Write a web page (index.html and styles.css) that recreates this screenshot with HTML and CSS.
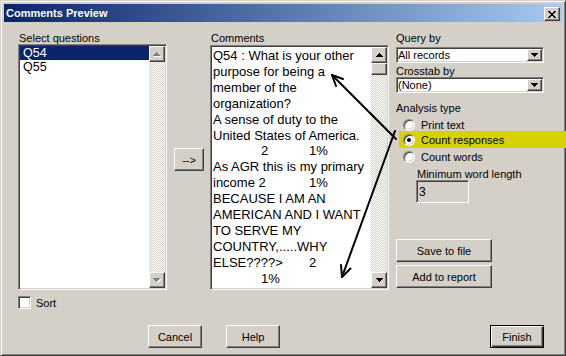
FILE: index.html
```html
<!DOCTYPE html>
<html>
<head>
<meta charset="utf-8">
<title>Comments Preview</title>
<link rel="stylesheet" href="styles.css">
</head>
<body>
<div class="window">
  <div class="titlebar">
    <span class="title">Comments Preview</span>
    <div class="close raised"><svg width="8" height="7" viewBox="0 0 8 7"><path d="M0 0h2v1H0zM6 0h2v1H6zM1 1h2v1H1zM5 1h2v1H5zM2 2h4v1H2zM3 3h2v1H3zM2 4h4v1H2zM1 5h2v1H1zM5 5h2v1H5zM0 6h2v1H0zM6 6h2v1H6z" fill="#000"/></svg></div>
  </div>
  <div class="client">
    <div class="main">
      <div class="col col-left">
        <div class="label pad1">Select questions</div>
        <div class="listbox sunken">
          <div class="list-items">
            <div class="item selected">Q54</div>
            <div class="item">Q55</div>
          </div>
          <div class="vscroll">
            <div class="sb-btn raised"><svg width="8" height="5" viewBox="0 0 8 5"><path d="M4 1h1v1h1v1h1v1h1v1H1V4h1V3h1V2h1z" fill="#fff"/><path d="M3 0h1v1h1v1h1v1h1v1H0V3h1V2h1V1h1z" fill="#808080"/></svg></div>
            <div class="sb-track"></div>
            <div class="sb-btn raised"><svg width="8" height="5" viewBox="0 0 8 5"><path d="M1 1h7v1H7v1H6v1H5v1H4V4H3V3H2V2H1z" fill="#fff"/><path d="M0 0h7v1H6v1H5v1H4v1H3V3H2V2H1V1H0z" fill="#808080"/></svg></div>
          </div>
        </div>
        <div class="check-row"><span class="checkbox sunken"></span><span>Sort</span></div>
      </div>
      <div class="col col-mid">
        <div class="btn raised arrow-btn">--&gt;</div>
      </div>
      <div class="col col-comments">
        <div class="label pad1">Comments</div>
        <div class="memo sunken">
          <div class="memo-text">Q54 : What is your other
purpose for being a
member of the
organization?
A sense of duty to the
United States of America.
&#9;2&#9;1%
As AGR this is my primary
income 2&#9;1%
BECAUSE I AM AN
AMERICAN AND I WANT
TO SERVE MY
COUNTRY,.....WHY
ELSE????&gt;&#9;2
&#9;1%</div>
          <div class="vscroll">
            <div class="sb-btn raised"><svg width="7" height="4" viewBox="0 0 7 4"><path d="M3 0h1v1h1v1h1v1h1v1H0V3h1V2h1V1h1z" fill="#000"/></svg></div>
            <div class="sb-thumb raised"></div>
            <div class="sb-track"></div>
            <div class="sb-btn raised"><svg width="7" height="4" viewBox="0 0 7 4"><path d="M0 0h7v1H6v1H5v1H4v1H3V3H2V2H1V1H0z" fill="#000"/></svg></div>
          </div>
        </div>
      </div>
      <div class="col col-right">
        <div class="label">Query by</div>
        <div class="combo sunken combo-first">
          <span class="combo-text">All records</span>
          <span class="combo-btn raised"><svg width="7" height="4" viewBox="0 0 7 4"><path d="M0 0h7v1H6v1H5v1H4v1H3V3H2V2H1V1H0z" fill="#000"/></svg></span>
        </div>
        <div class="label label-cross">Crosstab by</div>
        <div class="combo sunken">
          <span class="combo-text">(None)</span>
          <span class="combo-btn raised"><svg width="7" height="4" viewBox="0 0 7 4"><path d="M0 0h7v1H6v1H5v1H4v1H3V3H2V2H1V1H0z" fill="#000"/></svg></span>
        </div>
        <div class="label label-analysis">Analysis type</div>
        <div class="radios">
          <div class="radio-row"><span class="radio"></span><span>Print text</span></div>
          <div class="radio-row hl"><span class="radio checked"></span><span>Count responses</span></div>
          <div class="radio-row r3"><span class="radio"></span><span>Count words</span></div>
        </div>
        <div class="label minlen">Minimum word length</div>
        <div class="numbox sunken">3</div>
        <div class="btn raised side-btn save-btn">Save to file</div>
        <div class="btn raised side-btn add-btn">Add to report</div>
      </div>
    </div>
    <div class="footer">
      <div class="btn raised fbtn">Cancel</div>
      <div class="btn raised fbtn help-btn">Help</div>
      <div class="btn default fbtn finish-btn">Finish</div>
    </div>
  </div>
  <svg class="annot" width="566" height="356" viewBox="0 0 566 356">
    <g stroke="#000" stroke-width="2" fill="none" stroke-linecap="round" stroke-linejoin="round">
      <path d="M396 139 L332 75"/>
      <path d="M336 86 L332 75 L343 79"/>
      <path d="M395 131 L342 277"/>
      <path d="M341 265 L342 277 L350.5 268.5"/>
    </g>
  </svg>
</div>
</body>
</html>
```

FILE: styles.css
```css
* { box-sizing: border-box; }
html, body { margin: 0; padding: 0; }
body {
  width: 566px;
  height: 356px;
  overflow: hidden;
  background: #d4d0c8;
  font-family: "Liberation Sans", Arial, sans-serif;
  font-size: 11px;
  color: #000;
}
.window {
  position: relative;
  width: 566px;
  height: 356px;
  border: 1px solid;
  border-color: #d4d0c8 #404040 #404040 #d4d0c8;
  box-shadow: inset 1px 1px #fff, inset -1px -1px #808080;
  padding: 3px;
  background: #d4d0c8;
  display: flex;
  flex-direction: column;
}
.titlebar {
  height: 18px;
  flex: none;
  display: flex;
  align-items: flex-start;
  background: linear-gradient(to right, #0a246a, #a6caf0);
  color: #fff;
}
.title {
  font-weight: bold;
  font-size: 11px;
  line-height: 17px;
  padding-top: 1px;
  padding-left: 2px;
  white-space: nowrap;
}
.raised {
  background: #d4d0c8;
  border: 1px solid;
  border-color: #fff #404040 #404040 #fff;
  box-shadow: inset -1px -1px #808080;
}
.sunken {
  border: 1px solid;
  border-color: #808080 #fff #fff #808080;
  box-shadow: inset 1px 1px #404040, inset -1px -1px #d4d0c8;
  padding: 1px;
}
.close {
  margin-left: auto;
  margin-right: 2px;
  margin-top: 3px;
  width: 16px;
  height: 14px;
  display: flex;
  align-items: center;
  justify-content: center;
}
.close svg { display: block; }
.client {
  flex: 1;
  display: flex;
  flex-direction: column;
  padding: 10px 18px 4px 14px;
}
.main {
  display: flex;
  align-items: flex-start;
}
.label {
  line-height: 12px;
  height: 12px;
  white-space: nowrap;
}
.pad1 { padding-left: 1px; }
.col-left { width: 149px; }
.listbox {
  height: 246px;
  display: flex;
  background: #fff;
}
.list-items { flex: 1; }
.item {
  height: 14px;
  line-height: 14px;
  padding-left: 3px;
  font-family: "Liberation Sans Narrow", "Liberation Sans", Arial, sans-serif;
  font-size: 12.5px;
}
.item.selected { background: #0a246a; color: #fff; }
.vscroll {
  width: 16px;
  flex: none;
  display: flex;
  flex-direction: column;
}
.sb-btn {
  width: 16px;
  height: 16px;
  flex: none;
  display: flex;
  align-items: center;
  justify-content: center;
}
.sb-btn svg { display: block; }
.sb-thumb { width: 16px; height: 12px; flex: none; }
.sb-track {
  flex: 1;
  background-color: #fff;
  background-image: repeating-conic-gradient(#d4d0c8 0 25%, #fff 0 50%);
  background-size: 2px 2px;
}
.check-row {
  margin-top: 6px;
  height: 13px;
  display: flex;
  align-items: center;
  line-height: 12px;
}
.checkbox {
  width: 13px;
  height: 13px;
  background: #fff;
  margin-right: 5px;
  flex: none;
}
.col-mid {
  width: 30px;
  margin-left: 7px;
  padding-top: 116px;
}
.btn {
  display: flex;
  align-items: center;
  justify-content: center;
  line-height: 12px;
  white-space: nowrap;
}
.arrow-btn { width: 30px; height: 23px; }
.col-comments {
  width: 179px;
  margin-left: 6px;
}
.memo {
  margin-top: 1px;
  height: 245px;
  display: flex;
  background: #fff;
}
.memo-text {
  flex: 1;
  overflow: hidden;
  white-space: pre;
  tab-size: 48px;
  -moz-tab-size: 48px;
  font-size: 13px;
  line-height: 15.9px;
  padding: 1px 0 0 1px;
}
.col-right {
  width: 148px;
  margin-left: 7px;
}
.combo {
  height: 16px;
  display: flex;
  background: #fff;
  padding: 1px 1px 1px 0;
}
.combo-first { margin-top: 3px; }
.combo-text {
  flex: 1;
  line-height: 12px;
  padding-left: 1px;
  white-space: nowrap;
}
.combo-btn {
  width: 15px;
  height: 12px;
  flex: none;
  display: flex;
  align-items: center;
  justify-content: center;
}
.combo-btn svg { display: block; }
.label-cross { margin-top: 2px; }
.label-analysis { margin-top: 9px; }
.radios { margin-top: 3px; }
.radio-row {
  height: 16px;
  display: flex;
  align-items: center;
  padding-left: 7px;
  line-height: 12px;
  white-space: nowrap;
}
.radio-row.hl {
  margin-top: -2px;
  height: 17px;
  padding-top: 1px;
  margin-left: 3px;
  padding-left: 4px;
  margin-right: -22px;
  background: #d6d200;
}
.radio-row.r3 { height: 18px; }
.radio {
  width: 12px;
  height: 12px;
  border-radius: 50%;
  background: #fff;
  border: 1px solid;
  border-color: #808080 #fff #fff #808080;
  box-shadow: inset 1px 1px #404040, inset -1px -1px #d4d0c8;
  margin-right: 6px;
  display: flex;
  align-items: center;
  justify-content: center;
  flex: none;
}
.radio.checked::after {
  content: "";
  width: 4px;
  height: 4px;
  border-radius: 50%;
  background: #000;
}
.minlen { margin-top: 2px; padding-left: 21px; }
.numbox {
  margin-left: 20px;
  width: 53px;
  height: 23px;
  background: #d4d0c8;
  font-size: 12px;
  line-height: 14px;
  padding: 4px 1px 1px 2px;
}
.side-btn { width: 96px; height: 23px; }
.save-btn { margin-top: 36px; }
.add-btn { margin-top: 3px; }
.footer {
  margin-top: auto;
  display: flex;
  padding-left: 130px;
}
.fbtn { width: 54px; height: 23px; }
.help-btn { margin-left: 24px; }
.finish-btn { margin-left: auto; }
.btn.default {
  background: #d4d0c8;
  border: 1px solid #000;
  box-shadow: inset 1px 1px #fff, inset -1px -1px #404040, inset -2px -2px #808080;
}
.annot {
  position: absolute;
  left: -1px;
  top: -1px;
  pointer-events: none;
}
```
